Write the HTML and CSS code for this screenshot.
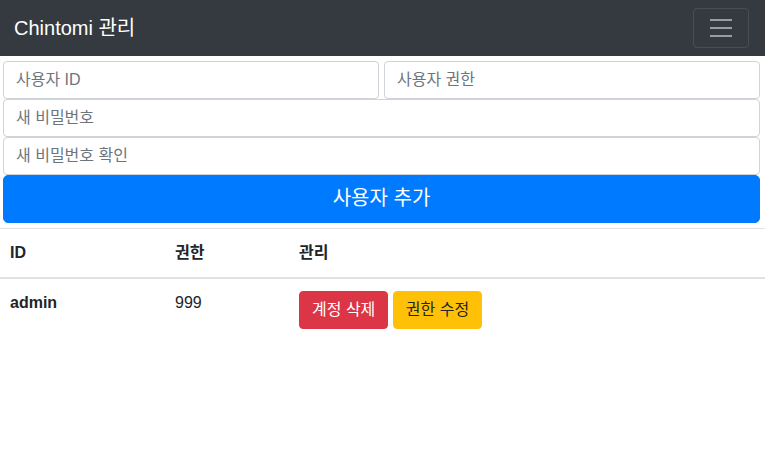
FILE: index.html
```html
<!DOCTYPE html>
<html lang="ko">
<head>
    <meta charset="UTF-8">
    <meta name="viewport" content="width=device-width, initial-scale=1.0">
    <title>Chintomi 관리</title>
    <link rel="stylesheet" href="styles.css">
</head>
<body>
    <nav class="navbar">
        <a class="brand" href="#">Chintomi 관리</a>
        <button class="toggler" type="button" aria-label="메뉴">
            <svg width="30" height="30" viewBox="0 0 30 30">
                <path d="M4 7h22M4 15h22M4 23h22" stroke="rgba(255,255,255,0.5)" stroke-width="2" stroke-linecap="butt"/>
            </svg>
        </button>
    </nav>

    <form class="user-form">
        <div class="form-row">
            <input type="text" class="field" placeholder="사용자 ID">
            <input type="text" class="field" placeholder="사용자 권한">
        </div>
        <input type="password" class="field" placeholder="새 비밀번호">
        <input type="password" class="field" placeholder="새 비밀번호 확인">
        <button type="button" class="btn-add">사용자 추가</button>
    </form>

    <table class="user-table">
        <thead>
            <tr>
                <th class="col-id">ID</th>
                <th class="col-level">권한</th>
                <th>관리</th>
            </tr>
        </thead>
        <tbody>
            <tr>
                <th>admin</th>
                <td>999</td>
                <td>
                    <button class="btn btn-danger">계정 삭제</button>
                    <button class="btn btn-warning">권한 수정</button>
                </td>
            </tr>
        </tbody>
    </table>
</body>
</html>
```

FILE: styles.css
```css
* {
    box-sizing: border-box;
}

body {
    margin: 0;
    font-family: "Liberation Sans", "Noto Sans CJK KR", sans-serif;
    font-size: 16px;
    line-height: 1.5;
    color: #212529;
    background: #fff;
}

.navbar {
    background-color: #343a40;
    height: 56px;
    display: flex;
    align-items: center;
    justify-content: space-between;
    padding: 0 16px 0 14px;
}

.brand {
    color: #fff;
    font-size: 20px;
    line-height: 30px;
    text-decoration: none;
}

.toggler {
    width: 56px;
    height: 40px;
    margin-top: -1px;
    padding: 0;
    background: transparent;
    border: 1px solid rgba(255, 255, 255, 0.1);
    border-radius: 4px;
    display: flex;
    align-items: center;
    justify-content: center;
}

.user-form {
    display: flex;
    flex-direction: column;
    padding: 5px 5px 0 3px;
}

.form-row {
    display: flex;
    gap: 5px;
}

.field {
    width: 100%;
    height: 38px;
    padding: 6px 12px;
    font-family: inherit;
    font-size: 16px;
    line-height: 24px;
    color: #495057;
    border: 1px solid #ced4da;
    border-radius: 4px;
    background: #fff;
}

.field::placeholder {
    color: #6c757d;
}

.btn-add {
    padding: 7px 16px 9px;
    font-family: inherit;
    font-size: 20px;
    line-height: 30px;
    color: #fff;
    background-color: #007bff;
    border: 1px solid #007bff;
    border-radius: 5px;
}

.user-table {
    width: 100%;
    margin-top: 5px;
    border-collapse: collapse;
}

.user-table th,
.user-table td {
    padding: 12px 10px;
    text-align: left;
    vertical-align: top;
    border-top: 1px solid #dee2e6;
}

.user-table thead th {
    border-bottom: 2px solid #dee2e6;
}

.col-id {
    width: 165px;
}

.col-level {
    width: 124px;
}

.btn {
    font-family: inherit;
    font-size: 16px;
    line-height: 24px;
    padding: 6px 12px;
    border: 1px solid transparent;
    border-radius: 4px;
}

.btn-danger {
    color: #fff;
    background-color: #dc3545;
    border-color: #dc3545;
}

.btn-warning {
    color: #212529;
    background-color: #ffc107;
    border-color: #ffc107;
}
```
